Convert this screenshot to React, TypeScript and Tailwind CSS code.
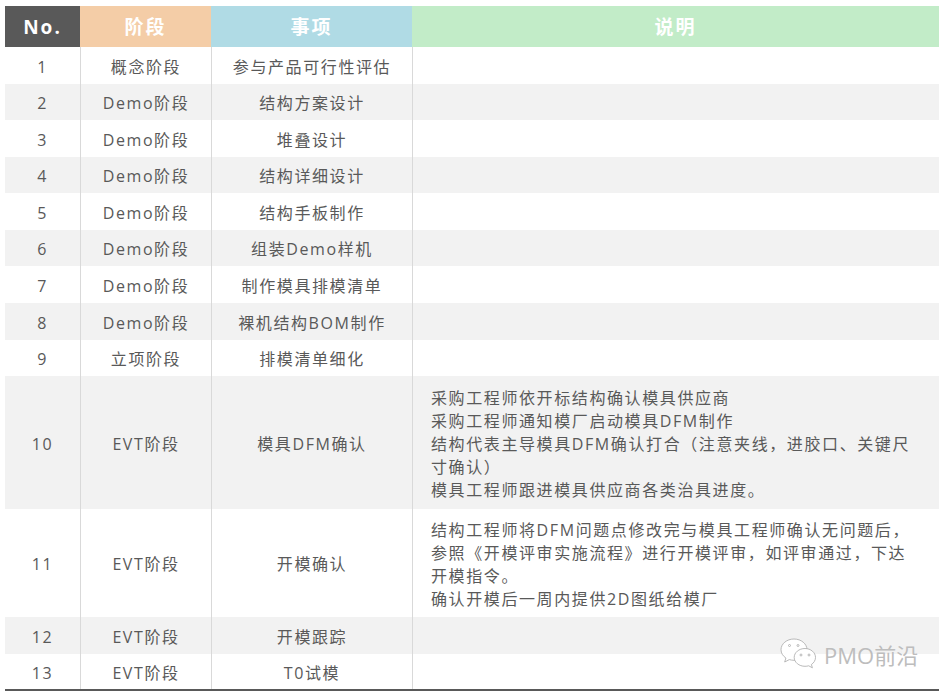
const rows = [
  { no: "1", stage: "概念阶段", item: "参与产品可行性评估", h: "h-[37px]" },
  { no: "2", stage: "Demo阶段", item: "结构方案设计", h: "h-[36px]" },
  { no: "3", stage: "Demo阶段", item: "堆叠设计", h: "h-[37px]" },
  { no: "4", stage: "Demo阶段", item: "结构详细设计", h: "h-[36px]" },
  { no: "5", stage: "Demo阶段", item: "结构手板制作", h: "h-[37px]" },
  { no: "6", stage: "Demo阶段", item: "组装Demo样机", h: "h-[36px]" },
  { no: "7", stage: "Demo阶段", item: "制作模具排模清单", h: "h-[37px]" },
  { no: "8", stage: "Demo阶段", item: "裸机结构BOM制作", h: "h-[37px]" },
  { no: "9", stage: "立项阶段", item: "排模清单细化", h: "h-[36px]" },
  {
    no: "10",
    stage: "EVT阶段",
    item: "模具DFM确认",
    h: "h-[133px]",
    notes: [
      "采购工程师依开标结构确认模具供应商",
      "采购工程师通知模厂启动模具DFM制作",
      "结构代表主导模具DFM确认打合（注意夹线，进胶口、关键尺寸确认）",
      "模具工程师跟进模具供应商各类治具进度。",
    ],
  },
  {
    no: "11",
    stage: "EVT阶段",
    item: "开模确认",
    h: "h-[108px]",
    notes: [
      "结构工程师将DFM问题点修改完与模具工程师确认无问题后，参照《开模评审实施流程》进行开模评审，如评审通过，下达开模指令。",
      "确认开模后一周内提供2D图纸给模厂",
    ],
  },
  { no: "12", stage: "EVT阶段", item: "开模跟踪", h: "h-[37px]" },
  { no: "13", stage: "EVT阶段", item: "T0试模", h: "h-[35px]" },
];

function WechatMark() {
  return (
    <svg width="38" height="34" viewBox="0 0 38 34" fill="none" stroke="#a8a8a8" strokeWidth="0.8">
      <path d="M14 1C6.8 1 1 5.800 1 11.700c0 3.400 1.900 6.300 4.900 8.300L4.700 24l4.600-2.400c1.500.4 3 .7 4.700.7 7.200 0 13-4.800 13-10.600S21.200 1 14 1z" fill="#ffffff" />
      <path d="M25 10.500c-6 0-10.800 4-10.800 8.900s4.800 8.900 10.800 8.900c1.300 0 2.500-.2 3.700-.5l3.700 2-1-3.300c2.500-1.600 4.100-4.200 4.100-7.100 0-4.900-4.800-8.900-10.500-8.900z" fill="#ffffff" />
      <circle cx="9.500" cy="7.500" r="1" />
      <circle cx="18" cy="7.500" r="1" />
      <circle cx="21" cy="17" r="1" />
      <circle cx="29" cy="17" r="1" />
    </svg>
  );
}

export default function App() {
  return (
    <div className="relative h-[696px] w-[950px] overflow-hidden bg-white pl-[5px] pt-[6px] font-['Open_Sans','Noto_Sans_CJK_SC',sans-serif] text-[16px] tracking-[1.6px] text-[#595959]">
      <div className="w-[934px]">
        <div className="grid h-[41px] grid-cols-[75px_131px_201px_527px] items-stretch text-[19px] font-bold tracking-[2px] text-white">
          <div className="flex items-center justify-center bg-[#595959] pt-[2px]">No.</div>
          <div className="flex items-center justify-center bg-[#f4cda7] pt-[2px]">阶段</div>
          <div className="flex items-center justify-center bg-[#b0dbe5] pt-[2px]">事项</div>
          <div className="flex items-center justify-center bg-[#c2ecc8] pt-[2px]">说明</div>
        </div>
        {rows.map((r, i) => (
          <div
            key={r.no}
            className={`grid grid-cols-[75px_131px_201px_527px] ${r.h} ${i % 2 === 1 ? "bg-[#f2f2f2]" : "bg-white"}`}
          >
            <div className="flex items-center justify-center pt-[2px]">{r.no}</div>
            <div className="flex items-center justify-center border-l border-[#d9d9d9] pt-[2px]">{r.stage}</div>
            <div className="flex items-center justify-center border-l border-[#d9d9d9] pt-[2px]">{r.item}</div>
            <div className="flex flex-col justify-center border-l border-[#d9d9d9] pl-[18px] pr-[20px] pt-[4px] leading-[23px]">
              {r.notes?.map((n) => (
                <p key={n}>{n}</p>
              ))}
            </div>
          </div>
        ))}
        <div className="h-[2px] bg-[#595959]" />
      </div>
      <div className="absolute left-[780px] top-[638px] flex items-center gap-[6px]">
        <WechatMark />
        <span className="text-[22px] font-normal tracking-[0px] text-[#bdbdbd]">PMO前沿</span>
      </div>
    </div>
  );
}
